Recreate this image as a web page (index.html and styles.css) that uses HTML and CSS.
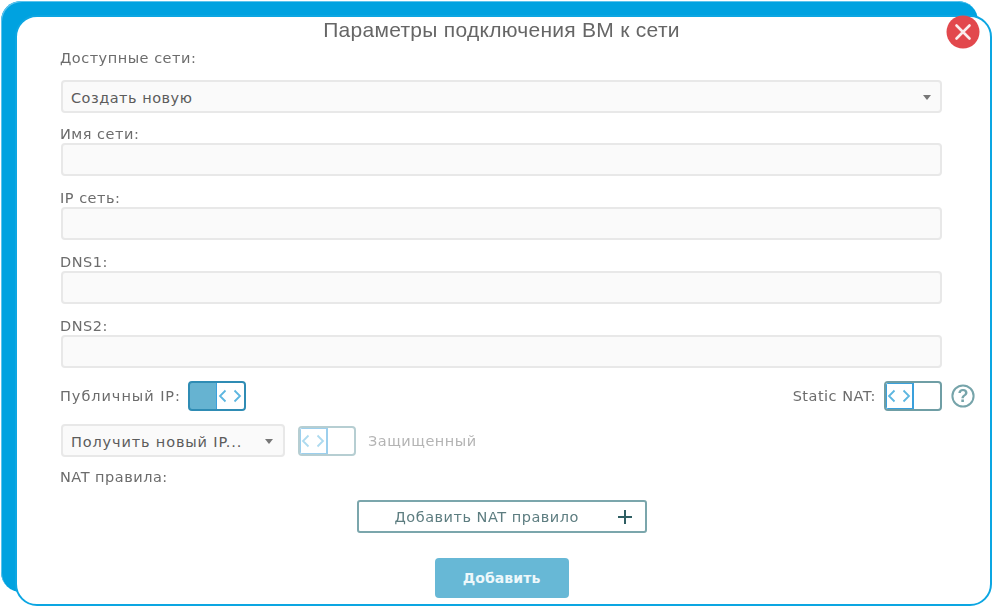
FILE: index.html
```html
<!DOCTYPE html>
<html lang="ru">
<head>
<meta charset="utf-8">
<title>Параметры подключения ВМ к сети</title>
<link rel="stylesheet" href="styles.css">
</head>
<body>
<div class="stage">
  <div class="back"></div>
  <main class="card">
    <h1 class="title">Параметры подключения ВМ к сети</h1>
    <button class="close" aria-label="Закрыть">
      <svg width="34" height="34" viewBox="0 0 34 34"><circle cx="17" cy="17" r="16.5" fill="#e2484d"/><path d="M10.5 10.5 23.5 23.5M23.5 10.5 10.5 23.5" stroke="#fbeeee" stroke-width="2.6" stroke-linecap="round"/></svg>
    </button>
    <form class="form">
      <label class="label first">Доступные сети:</label>
      <div class="field select">Создать новую<span class="caret"></span></div>
      <label class="label second">Имя сети:</label>
      <div class="field"></div>
      <label class="label">IP сеть:</label>
      <div class="field"></div>
      <label class="label">DNS1:</label>
      <div class="field"></div>
      <label class="label">DNS2:</label>
      <div class="field"></div>

      <div class="row-toggles">
        <span class="text public">Публичный IP:</span>
        <span class="toggle on"><span class="fill"></span><span class="knob"><svg width="26" height="16" viewBox="0 0 26 16"><path d="M8.5 2.5 3 8l5.500 5.500M17.500 2.500 23 8l-5.500 5.500" fill="none" stroke="#5cb6e0" stroke-width="1.8"/></svg></span></span>
        <span class="spacer"></span>
        <span class="text">Static NAT:</span>
        <span class="toggle off"><span class="knob"><svg width="26" height="16" viewBox="0 0 26 16"><path d="M8.5 2.5 3 8l5.500 5.500M17.500 2.500 23 8l-5.500 5.500" fill="none" stroke="#5cb6e0" stroke-width="1.8"/></svg></span></span>
        <svg class="help" width="24" height="24" viewBox="0 0 24 24"><circle cx="12" cy="12" r="10.600" fill="none" stroke="#76a4aa" stroke-width="2"/><text x="12" y="18" text-anchor="middle" class="help-q">?</text></svg>
      </div>

      <div class="row-ip">
        <div class="field select small">Получить новый IP...<span class="caret"></span></div>
        <span class="toggle off faded"><span class="knob"><svg width="26" height="16" viewBox="0 0 26 16"><path d="M8.5 2.5 3 8l5.500 5.500M17.500 2.500 23 8l-5.500 5.500" fill="none" stroke="#5cb6e0" stroke-width="1.8"/></svg></span></span>
        <span class="text muted">Защищенный</span>
      </div>

      <label class="label nat">NAT правила:</label>
      <div class="center">
        <button type="button" class="add-nat"><span class="add-nat-text">Добавить NAT правило</span><svg width="16" height="16" viewBox="0 0 16 16"><path d="M8 1v14M1 8h14" stroke="#2f5f63" stroke-width="2"/></svg></button>
      </div>
      <div class="center">
        <button type="button" class="submit">Добавить</button>
      </div>
    </form>
  </main>
</div>
</body>
</html>
```

FILE: styles.css
```css
* { box-sizing: border-box; }
html, body { margin: 0; padding: 0; background: #fff; }
body { width: 994px; height: 607px; overflow: hidden; font-family: "DejaVu Sans", sans-serif; }
.stage { display: grid; width: 994px; height: 607px; }
.back {
  grid-area: 1 / 1;
  margin: 1px 0 0 1px;
  width: 977px;
  height: 591px;
  background: #00a2e0;
  border-radius: 20px;
  box-shadow: inset 1px 1px 0 #5cc3ec;
}
.card {
  grid-area: 1 / 1;
  position: relative;
  margin: 15px 0 0 15px;
  width: 977px;
  height: 591px;
  background: #fff;
  border: 2px solid #0ca6e2;
  border-radius: 22px;
  padding: 1px 48px 0 44px;
  filter: blur(0.55px);
}
.title {
  margin: 0;
  height: 24px;
  font: 400 21px/24px "Liberation Sans", sans-serif;
  letter-spacing: 0.28px;
  color: #666;
  text-align: center;
}
.close {
  position: absolute;
  top: -2px;
  right: 10px;
  width: 34px;
  height: 34px;
  padding: 0;
  border: 0;
  background: none;
}
.close svg { display: block; }
.label, .text, .select, .add-nat { font-size: 14.5px; letter-spacing: 0.5px; }
.label, .text { color: #6c6c6c; }
.label { display: block; height: 18px; line-height: 18px; margin: 13px 0 0 -1px; }
.label.first { margin-top: 7px; }
.label.second { margin-top: 12px; }
.field {
  height: 33px;
  background: #fafafa;
  border: 2px solid #e8e8e8;
  border-radius: 4px;
}
.select {
  position: relative;
  padding-left: 8px;
  line-height: 33px;
  color: #5c5c5c;
}
.select.small { letter-spacing: 0.85px; }
.form > .select { margin-top: 13px; }
.caret {
  position: absolute;
  right: 9px;
  top: 13px;
  border: 4px solid transparent;
  border-top: 5px solid #777;
  border-bottom: 0;
}
.row-toggles { display: flex; align-items: center; height: 30px; margin-top: 13px; width: 914px; }
.row-toggles .toggle { margin-left: 8px; }
.row-toggles .toggle.on { margin-left: 7px; }
.text.public { margin-left: -1px; letter-spacing: 0.95px; }
.help { margin-left: 9px; flex: none; }
.help-q { font: 700 18px "Liberation Sans", sans-serif; fill: #76a4aa; }
.spacer { flex: 1; }
.toggle {
  display: inline-flex;
  flex: none;
  width: 58px;
  height: 30px;
  border: 2px solid #6f9ea5;
  border-radius: 4px;
  background: #fff;
  overflow: hidden;
}
.toggle.on { border-color: #2f8cb4; background: #66b3d1; }
.fill { flex: 1; }
.knob {
  display: flex;
  align-items: center;
  justify-content: center;
  width: 28px;
  background: #fff;
  border-right: 2px solid #3aa0dc;
  box-shadow: inset 2px 2px 0 -1px #3aa0dc, inset -1px -2px 0 -1px #3aa0dc;
}
.on .knob { border-right: 0; border-left: 1px solid #3aa0dc; box-shadow: none; }
.faded { opacity: 0.5; }
.row-ip { display: flex; align-items: center; gap: 13px; margin-top: 13px; height: 33px; }
.field.small { flex: none; width: 224px; }
.small .caret { right: 10px; }
.text.muted { color: #b4b4b4; margin-left: -1px; }
.label.nat { margin-top: 11px; }
.center { display: flex; justify-content: center; }
.add-nat {
  display: flex;
  align-items: center;
  justify-content: space-between;
  width: 290px;
  height: 33px;
  margin-top: 14px;
  padding: 0 12px 0 36px;
  background: #fff;
  border: 2px solid #7ba6ac;
  border-radius: 3px;
  font-family: "DejaVu Sans", sans-serif;
  color: #5d7d80;
}
.submit {
  width: 134px;
  height: 40px;
  margin-top: 25px;
  border: 0;
  border-radius: 4px;
  background: #67b8d6;
  color: #eef8fb;
  font: 700 14px "DejaVu Sans", sans-serif;
  letter-spacing: 0.1px;
}
```
